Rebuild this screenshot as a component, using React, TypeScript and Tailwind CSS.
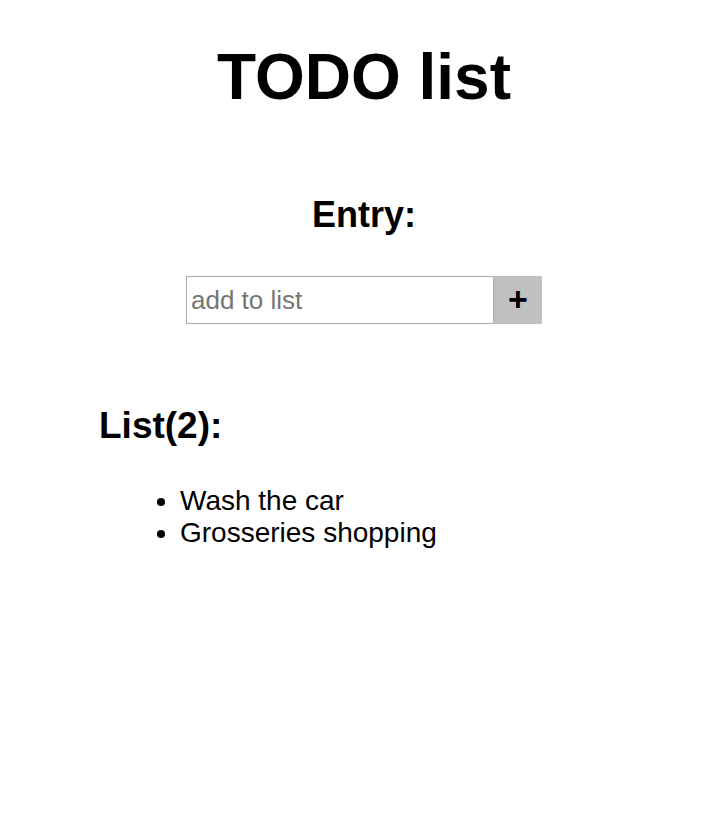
import React from "react";

export default function App() {
  const items = ["Wash the car", "Grosseries shopping"];
  return (
    <div className="min-h-[823px] w-full bg-white text-black" style={{ fontFamily: '"Liberation Sans", Arial, sans-serif' }}>
      <div className="pl-[13px] pt-[40px]">
        <h1 className="text-center text-[64px] font-bold leading-[74px]">TODO list</h1>
        <h2 className="mt-[80px] text-center text-[36px] font-bold leading-[41px]">Entry:</h2>
        <div className="mt-[41px] flex justify-center">
          <input
            type="text"
            placeholder="add to list"
            className="h-[48px] w-[308px] border border-[#a9a9a9] px-[4px] text-[26px] outline-none placeholder:text-[#757575]"
          />
          <button className="flex h-[48px] w-[48px] items-center justify-center bg-[#c0c0c0] pb-[2px] text-[34px] font-bold leading-none">
            +
          </button>
        </div>
      </div>
      <div className="pl-[99px] pt-[81px]">
        <h2 className="text-[37px] font-bold leading-[41px]">List({items.length}):</h2>
        <ul className="mt-[39px] list-disc pl-[81px] text-[28px] leading-[32px]">
          {items.map((t) => (
            <li key={t}>{t}</li>
          ))}
        </ul>
      </div>
    </div>
  );
}
